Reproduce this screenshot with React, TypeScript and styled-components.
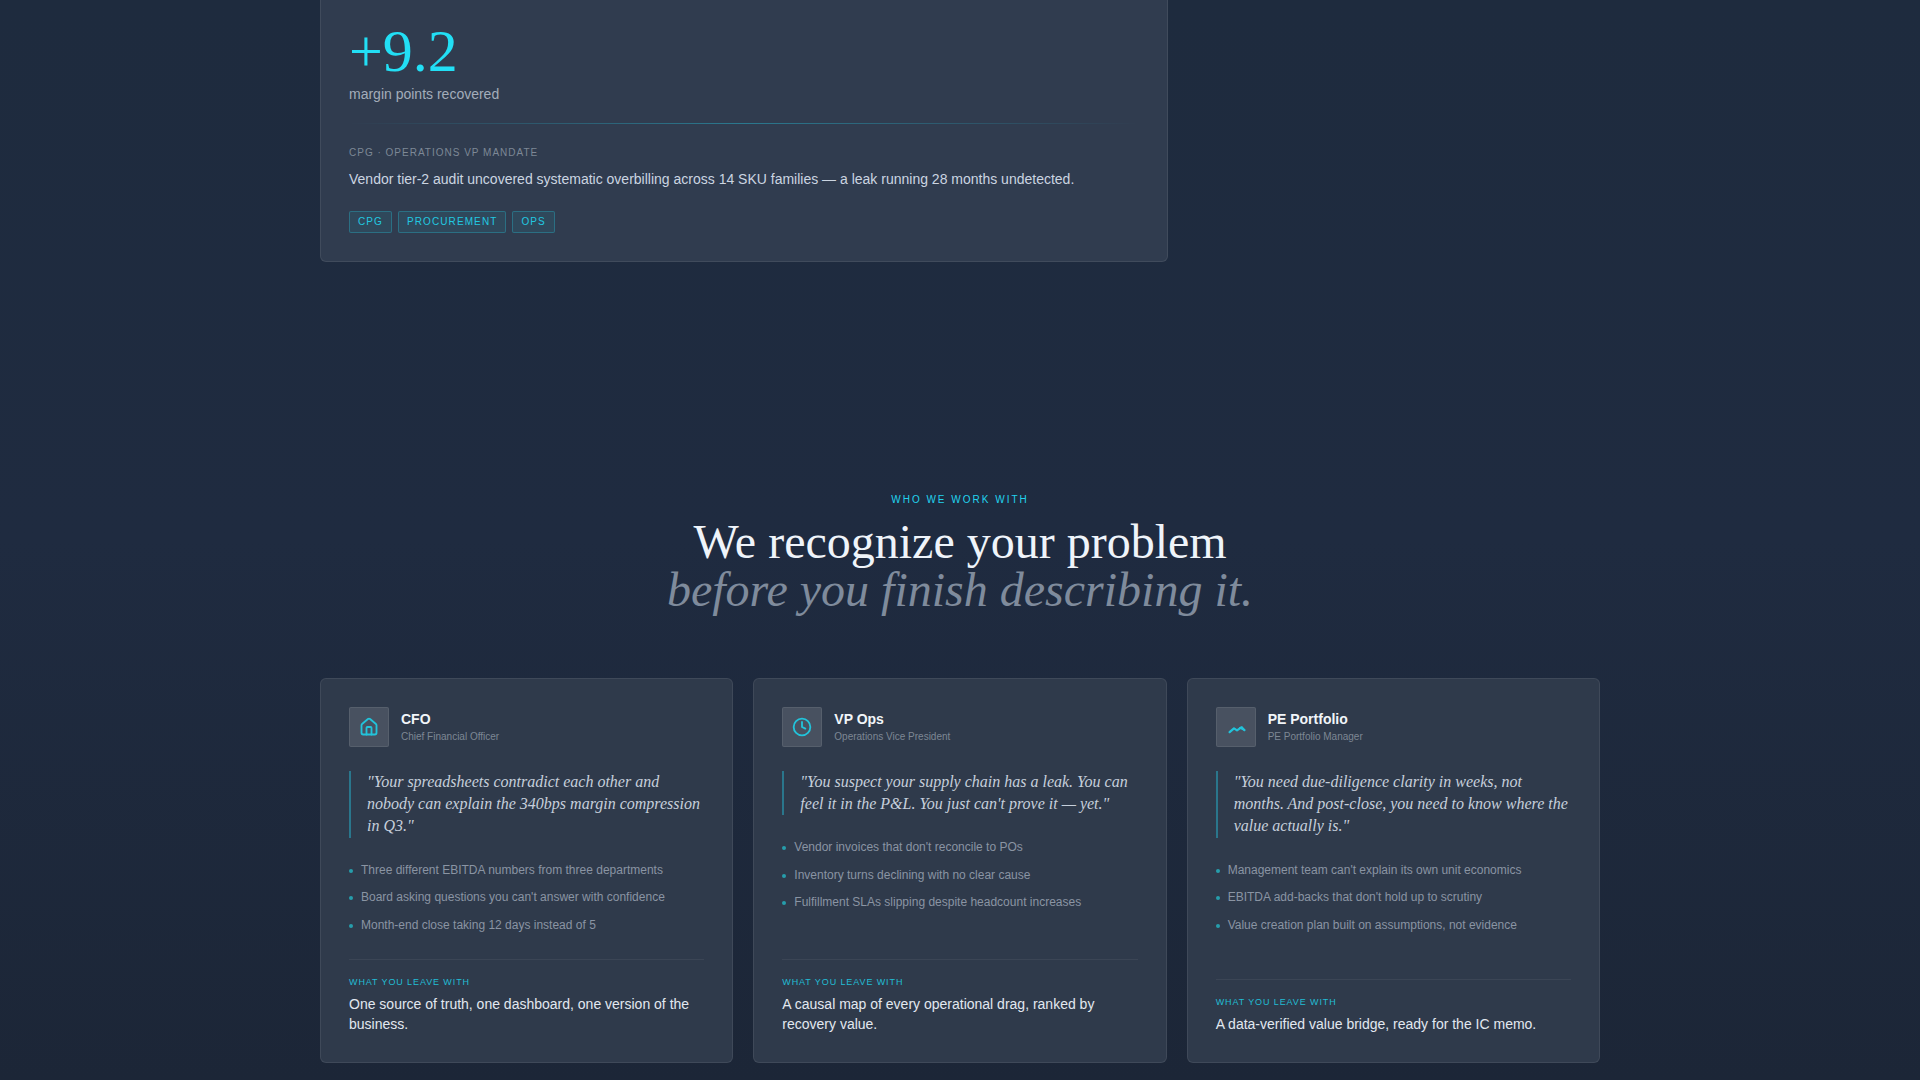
import React from 'react';
import styled, { createGlobalStyle } from 'styled-components';
import { House, Clock } from 'lucide-react';

const Global = createGlobalStyle`
  html, body { margin: 0; padding: 0; height: 100%; overflow: hidden; background: #1e2a3e; }
  * { box-sizing: border-box; }
  #root { height: 100%; }
`;

const sans = `"Liberation Sans", Arial, sans-serif`;
const serif = `"Liberation Serif", "Times New Roman", serif`;

const Page = styled.div`
  width: 1920px;
  height: 1080px;
  overflow: hidden;
  background: linear-gradient(180deg, #1e2b3e 0%, #1f2b40 50%, #1c2637 100%);
  font-family: ${sans};
`;

const Container = styled.div`
  width: 1280px;
  margin: 0 auto;
`;

const CaseGrid = styled.div`
  display: grid;
  grid-template-columns: 848px 1fr;
  margin-top: -8px;
`;

const CaseCard = styled.article`
  padding: 28px;
  background: #303c4f;
  border: 1px solid rgba(255, 255, 255, 0.08);
  border-radius: 6px;
`;

const Metric = styled.div`
  font-family: ${serif};
  font-size: 60px;
  line-height: 1;
  color: #22dff5;
`;

const MetricLabel = styled.div`
  margin-top: 3px;
  font-size: 14px;
  line-height: 20px;
  color: #a3adba;
`;

const GlowRule = styled.div`
  height: 1px;
  margin: 19px 0 22px;
  background: linear-gradient(90deg, transparent, rgba(34, 211, 238, 0.4), transparent);
`;

const CaseKicker = styled.div`
  font-size: 10px;
  line-height: 14px;
  letter-spacing: 0.1em;
  color: #7d8896;
`;

const CaseText = styled.p`
  margin: 8px 0 0;
  font-size: 14px;
  line-height: 22px;
  color: #cbd5e1;
`;

const Tags = styled.div`
  display: flex;
  gap: 6px;
  margin-top: 21px;
`;

const Tag = styled.span`
  display: block;
  height: 22px;
  padding: 0 8px;
  font-size: 10px;
  line-height: 20px;
  letter-spacing: 0.11em;
  color: #22c8e0;
  background: rgba(34, 211, 238, 0.08);
  border: 1px solid rgba(34, 211, 238, 0.28);
  border-radius: 2px;
`;

const Intro = styled.header`
  margin-top: 231px;
  text-align: center;
`;

const Eyebrow = styled.div`
  font-size: 10px;
  line-height: 14px;
  letter-spacing: 0.2em;
  color: #22d3ee;
`;

const Heading = styled.h2`
  margin: 10.5px 0 0;
  font-family: ${serif};
  font-size: 48px;
  font-weight: 400;
  line-height: 48.5px;
  color: #eff4fa;
`;

const HeadingSoft = styled.em`
  display: block;
  color: #7f8b9c;
`;

const Personas = styled.div`
  display: grid;
  grid-template-columns: repeat(3, 1fr);
  gap: 20px;
  margin-top: 63.5px;
`;

const Persona = styled.article`
  display: flex;
  flex-direction: column;
  padding: 28px;
  background: #2f3a4b;
  border: 1px solid rgba(255, 255, 255, 0.08);
  border-radius: 6px;
`;

const PersonaHead = styled.div`
  display: flex;
  align-items: center;
  gap: 12px;
`;

const IconBox = styled.div`
  display: flex;
  align-items: center;
  justify-content: center;
  flex: none;
  width: 40px;
  height: 40px;
  color: #22c3da;
  background: rgba(255, 255, 255, 0.12);
  border: 1px solid rgba(255, 255, 255, 0.08);
  border-radius: 2px;
`;

const Name = styled.div`
  margin-bottom: 2px;
  font-size: 14px;
  font-weight: 700;
  line-height: 18px;
  color: #f1f5f9;
`;

const Role = styled.div`
  font-size: 10px;
  line-height: 14px;
  color: #7d8794;
`;

const Quote = styled.blockquote`
  margin: 23.5px 0 0;
  padding-left: 16px;
  border-left: 2px solid rgba(34, 211, 238, 0.4);
  font-family: ${serif};
  font-style: italic;
  font-size: 16px;
  line-height: 22.4px;
  color: #c6cfdb;
`;

const Pains = styled.ul`
  display: flex;
  flex-direction: column;
  gap: 8px;
  margin: 23.1px 0 23.2px;
  padding: 0;
  list-style: none;
`;

const Pain = styled.li`
  display: flex;
  align-items: center;
  gap: 8px;
  font-size: 12px;
  line-height: 19.5px;
  color: #8a94a3;
  &::before {
    content: '';
    flex: none;
    width: 4px;
    height: 4px;
    border-radius: 50%;
    background: rgba(34, 211, 225, 0.65);
  }
`;

const Outcome = styled.div`
  margin-top: auto;
  padding-top: 16px;
  border-top: 1px solid rgba(255, 255, 255, 0.06);
`;

const OutcomeLabel = styled.div`
  font-size: 9px;
  line-height: 13px;
  letter-spacing: 0.1em;
  color: #22bcd4;
`;

const OutcomeText = styled.p`
  margin: 5px 0 0;
  font-size: 14px;
  line-height: 20px;
  color: #e2e8f0;
`;

const TrendIcon = () => (
  <svg width="20" height="20" viewBox="0 0 20 20" fill="none" stroke="currentColor" strokeWidth="2.2" strokeLinecap="round" strokeLinejoin="round">
    <path d="M3.6 15.2 L8 11.4 L11 13.4 L15 10.6 L18.4 13" />
    <path d="M13.4 10.8 L16.2 9.6 L18.6 13 Z" fill="currentColor" strokeWidth="1" />
  </svg>
);

const personas = [
  {
    icon: <House size={20} strokeWidth={2.2} />,
    name: 'CFO',
    role: 'Chief Financial Officer',
    quote: '"Your spreadsheets contradict each other and nobody can explain the 340bps margin compression in Q3."',
    pains: ['Three different EBITDA numbers from three departments', "Board asking questions you can't answer with confidence", 'Month-end close taking 12 days instead of 5'],
    outcome: 'One source of truth, one dashboard, one version of the business.',
  },
  {
    icon: <Clock size={20} strokeWidth={2.2} />,
    name: 'VP Ops',
    role: 'Operations Vice President',
    quote: '"You suspect your supply chain has a leak. You can feel it in the P&L. You just can\'t prove it — yet."',
    pains: ["Vendor invoices that don't reconcile to POs", 'Inventory turns declining with no clear cause', 'Fulfillment SLAs slipping despite headcount increases'],
    outcome: 'A causal map of every operational drag, ranked by recovery value.',
  },
  {
    icon: <TrendIcon />,
    name: 'PE Portfolio',
    role: 'PE Portfolio Manager',
    quote: '"You need due-diligence clarity in weeks, not months. And post-close, you need to know where the value actually is."',
    pains: ["Management team can't explain its own unit economics", "EBITDA add-backs that don't hold up to scrutiny", 'Value creation plan built on assumptions, not evidence'],
    outcome: 'A data-verified value bridge, ready for the IC memo.',
  },
];

export default function App() {
  return (
    <Page>
      <Global />
      <Container>
        <CaseGrid>
          <CaseCard>
            <Metric>+9.2</Metric>
            <MetricLabel>margin points recovered</MetricLabel>
            <GlowRule />
            <CaseKicker>CPG · OPERATIONS VP MANDATE</CaseKicker>
            <CaseText>Vendor tier-2 audit uncovered systematic overbilling across 14 SKU families — a leak running 28 months undetected.</CaseText>
            <Tags>
              <Tag>CPG</Tag>
              <Tag>PROCUREMENT</Tag>
              <Tag>OPS</Tag>
            </Tags>
          </CaseCard>
        </CaseGrid>
        <Intro>
          <Eyebrow>WHO WE WORK WITH</Eyebrow>
          <Heading>
            We recognize your problem
            <HeadingSoft>before you finish describing it.</HeadingSoft>
          </Heading>
        </Intro>
        <Personas>
          {personas.map((p) => (
            <Persona key={p.name}>
              <PersonaHead>
                <IconBox>{p.icon}</IconBox>
                <div>
                  <Name>{p.name}</Name>
                  <Role>{p.role}</Role>
                </div>
              </PersonaHead>
              <Quote>{p.quote}</Quote>
              <Pains>
                {p.pains.map((t) => (
                  <Pain key={t}>{t}</Pain>
                ))}
              </Pains>
              <Outcome>
                <OutcomeLabel>WHAT YOU LEAVE WITH</OutcomeLabel>
                <OutcomeText>{p.outcome}</OutcomeText>
              </Outcome>
            </Persona>
          ))}
        </Personas>
      </Container>
    </Page>
  );
}
